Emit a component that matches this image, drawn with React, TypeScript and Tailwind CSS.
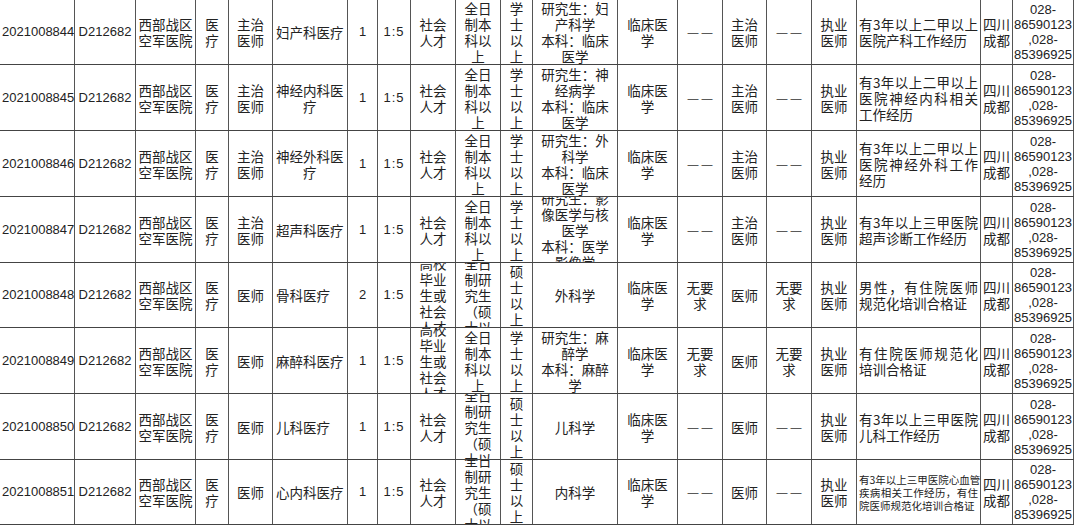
const GRID =
  "grid grid-rows-1 grid-cols-[75px_61px_60px_33px_44px_75px_30px_33px_45px_45px_32px_85px_60px_45px_44px_45px_45px_124px_32px_61px]";

// column alignment, written out in full
const colClass = [
  "items-start pl-[2px]",
  "items-center",
  "items-center",
  "items-center",
  "items-center",
  "items-start pl-[3px]",
  "items-center",
  "items-center",
  "items-center",
  "items-center",
  "items-center",
  "items-center",
  "items-center",
  "items-center",
  "items-center",
  "items-center",
  "items-center",
  "items-stretch px-[2px]",
  "items-center",
  "items-center",
];

type Row = {
  id: string;
  h: string;
  title: string;
  dept: string;
  n: string;
  src: string;
  edu: string;
  deg: string;
  major: string;
  req1: string;
  title2: string;
  req2: string;
  desc: string;
  small?: boolean;
};

const rows: Row[] = [
  {
    id: "2021008844", h: "h-[66px] -mt-px", title: "主治|医师", dept: "妇产科医疗", n: "1",
    src: "社会|人才", edu: "全日|制本|科以|上", deg: "学|士|以|上",
    major: "研究生：妇|产科学|本科：临床|医学", req1: "——", title2: "主治|医师", req2: "——",
    desc: "有3年以上二甲以上|医院产科工作经历",
  },
  {
    id: "2021008845", h: "h-[66px]", title: "主治|医师", dept: "神经内科医|疗", n: "1",
    src: "社会|人才", edu: "全日|制本|科以|上", deg: "学|士|以|上",
    major: "研究生：神|经病学|本科：临床|医学", req1: "——", title2: "主治|医师", req2: "——",
    desc: "有3年以上二甲以上|医院神经内科相关|工作经历",
  },
  {
    id: "2021008846", h: "h-[66px]", title: "主治|医师", dept: "神经外科医|疗", n: "1",
    src: "社会|人才", edu: "全日|制本|科以|上", deg: "学|士|以|上",
    major: "研究生：外|科学|本科：临床|医学", req1: "——", title2: "主治|医师", req2: "——",
    desc: "有3年以上二甲以上|医院神经外科工作|经历",
  },
  {
    id: "2021008847", h: "h-[66px]", title: "主治|医师", dept: "超声科医疗", n: "1",
    src: "社会|人才", edu: "全日|制本|科以|上", deg: "学|士|以|上",
    major: "研究生：影|像医学与核|医学|本科：医学|影像学", req1: "——", title2: "主治|医师", req2: "——",
    desc: "有3年以上三甲医院|超声诊断工作经历",
  },
  {
    id: "2021008848", h: "h-[65px]", title: "医师", dept: "骨科医疗", n: "2",
    src: "高校|毕业|生或|社会|人才", edu: "全日|制研|究生|（硕|士以|上）", deg: "硕|士|以|上",
    major: "外科学", req1: "无要|求", title2: "医师", req2: "无要|求",
    desc: "男性，有住院医师|规范化培训合格证",
  },
  {
    id: "2021008849", h: "h-[66px]", title: "医师", dept: "麻醉科医疗", n: "1",
    src: "高校|毕业|生或|社会|人才", edu: "全日|制本|科以|上", deg: "学|士|以|上",
    major: "研究生：麻|醉学|本科：麻醉|学", req1: "无要|求", title2: "医师", req2: "无要|求",
    desc: "有住院医师规范化|培训合格证",
  },
  {
    id: "2021008850", h: "h-[66px]", title: "医师", dept: "儿科医疗", n: "1",
    src: "社会|人才", edu: "全日|制研|究生|（硕|士以|上）", deg: "硕|士|以|上",
    major: "儿科学", req1: "——", title2: "医师", req2: "——",
    desc: "有3年以上三甲医院|儿科工作经历",
  },
  {
    id: "2021008851", h: "h-[65px]", title: "医师", dept: "心内科医疗", n: "1",
    src: "社会|人才", edu: "全日|制研|究生|（硕|士以|上）", deg: "硕|士|以|上",
    major: "内科学", req1: "——", title2: "医师", req2: "——",
    desc: "有3年以上三甲医院心血管|疾病相关工作经历，有住|院医师规范化培训合格证",
    small: true,
  },
];

function Lines({ text, justify, lead = "leading-[16px]" }: { text: string; justify?: boolean; lead?: string }) {
  if (text === "——") {
    return (
      <span className="font-['Liberation_Sans',sans-serif] text-[11px] leading-[16px] tracking-[3px] pl-[3px] text-[#333]">
        ——
      </span>
    );
  }
  const parts = text.split("|");
  // six-line cells start at the same top as five-line ones in the source sheet
  const wrap = parts.length > 5 ? "-mb-[16px]" : "";
  return (
    <div className={wrap}>
      {parts.map((p, i) => (
        <div
          key={i}
          className={
            lead +
            " whitespace-nowrap " +
            (justify && i < parts.length - 1 ? "text-justify [text-align-last:justify]" : "")
          }
        >
          {p}
        </div>
      ))}
    </div>
  );
}

export default function App() {
  return (
    <div className="w-[1080px] h-[525px] overflow-hidden bg-white text-[#222] font-['Noto_Sans_CJK_SC',sans-serif] text-[13.5px]">
      {rows.map((r) => {
        const cells = [
          <span className="font-['Liberation_Sans',sans-serif] text-[13px]">{r.id}</span>,
          <span className="font-['Liberation_Sans',sans-serif] text-[13px]">D212682</span>,
          <Lines text="西部战区|空军医院" />,
          <Lines text="医|疗" />,
          <Lines text={r.title} />,
          <Lines text={r.dept} />,
          <span className="font-['Liberation_Sans',sans-serif] text-[13px]">{r.n}</span>,
          <span className="font-['Liberation_Sans',sans-serif] text-[13px] tracking-[1px]">1:5</span>,
          <Lines text={r.src} />,
          <Lines text={r.edu} />,
          <Lines text={r.deg} />,
          <Lines text={r.major} />,
          <Lines text="临床医|学" />,
          <Lines text={r.req1} />,
          <Lines text={r.title2} />,
          <Lines text={r.req2} />,
          <Lines text="执业|医师" />,
          r.small ? (
            <div className="text-[10.5px] text-left">
              <Lines text={r.desc} justify lead="leading-[13px]" />
            </div>
          ) : (
            <div className="text-left">
              <Lines text={r.desc} justify />
            </div>
          ),
          <Lines text="四川|成都" />,
          <div className="font-['Liberation_Sans',sans-serif] text-[13px] text-center">
            <Lines text="028-|86590123|,028-|85396925" lead="leading-[15px]" />
          </div>,
        ];
        return (
          <div key={r.id} className={`bg-white w-[1074px] border-b border-[#444] ${GRID} ${r.h}`}>
            {cells.map((c, i) => (
              <div
                key={i}
                className={`flex flex-col justify-center min-h-0 overflow-hidden text-center border-r border-[#555] ${colClass[i]}`}
              >
                {c}
              </div>
            ))}
          </div>
        );
      })}
    </div>
  );
}
